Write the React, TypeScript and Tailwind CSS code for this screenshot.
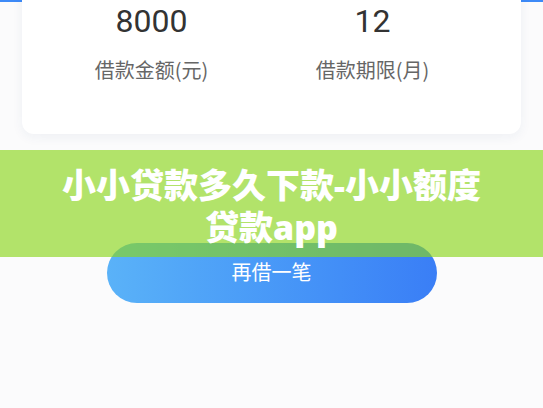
import React from "react";

const cjk = "font-['Noto_Sans','Noto_Sans_CJK_SC',sans-serif]";

export default function App() {
  const stats = [
    { value: "8000", label: "借款金额(元)" },
    { value: "12", label: "借款期限(月)" },
  ];

  return (
    <div className={`relative h-[408px] w-full overflow-hidden bg-[#fbfbfc] ${cjk}`}>
      <div className="-mt-[30px]">
        {/* blue header behind the loan card */}
        <div className="h-[32px] bg-[#3d8af7]" />

        {/* loan summary card */}
        <div className="mx-[22px] -mt-[22px] rounded-[12px] bg-white pl-[19px] pr-[38px] pt-[21px] pb-[50px] shadow-[0_3px_12px_rgba(30,60,120,0.06)]">
          <div className="grid grid-cols-2">
            {stats.map((s) => (
              <div key={s.label} className="flex flex-col items-center">
                <span className="text-[32px] leading-[40px] text-[#333333] font-['Roboto',sans-serif]">
                  {s.value}
                </span>
                <span className="mt-[15px] text-[20px] leading-[28px] text-[#666666] font-['Noto_Sans_CJK_SC',sans-serif]">
                  {s.label}
                </span>
              </div>
            ))}
          </div>
        </div>

        {/* borrow again button */}
        <div className="mt-[109px] flex justify-center">
          <button className="flex h-[60px] w-[330px] items-center justify-center rounded-full bg-gradient-to-r from-[#5ab2f8] to-[#3a7ef6] text-[20px] text-white">
            再借一笔
          </button>
        </div>
      </div>

      {/* title banner laid over the page */}
      <div className="absolute left-0 right-0 top-[150px] h-[107px] bg-[rgba(139,213,27,0.65)] pt-[14px] text-center">
        <p className="text-[34px] font-black leading-[42px] text-white">
          小小贷款多久下款-小小额度
          <br />
          贷款app
        </p>
      </div>
    </div>
  );
}
